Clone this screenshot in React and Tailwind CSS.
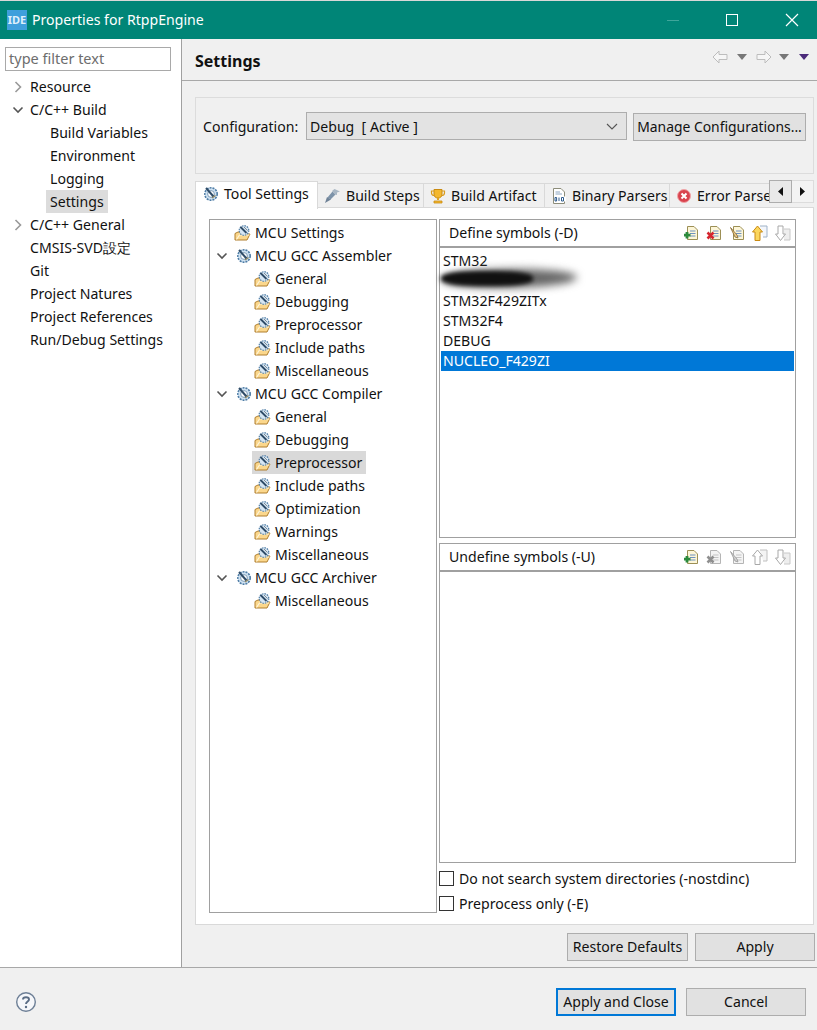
import React from "react";

const uiFont = "font-['Noto_Sans',sans-serif]";

function Chevron({ open, faded }) {
  return (
    <svg width="12" height="12" viewBox="0 0 12 12" fill="none" className="shrink-0">
      {open ? (
        <path d="M1.5 3.5 L6 8 L10.5 3.5" stroke="#555" strokeWidth="1.6" />
      ) : (
        <path d="M3.5 1 L8.5 6 L3.5 11" stroke={faded ? "#b0b0b0" : "#999"} strokeWidth="1.6" />
      )}
    </svg>
  );
}

function ToolIcon() {
  return (
    <svg width="16" height="16" viewBox="0 0 16 16" fill="none" className="shrink-0">
      <circle cx="8" cy="8" r="6.2" fill="#cfe2f2" stroke="#4f7da6" strokeWidth="1.6" strokeDasharray="2 1" />
      <circle cx="8" cy="8" r="3.4" fill="#fff" stroke="#7d9cb8" />
      <path d="M3 2 L10.5 10.5" stroke="#2f4c68" strokeWidth="2" />
      <path d="M9 12 L12.5 9.5" stroke="#8f8560" strokeWidth="1.3" />
    </svg>
  );
}

function FolderToolIcon() {
  return (
    <svg width="17" height="16" viewBox="0 0 17 16" fill="none" className="shrink-0">
      <path d="M1 15 L1 8.5 L4 7 L10 7 L10 9 L16 9 L13 15 Z" fill="#fbd78c" stroke="#b07f2e" />
      <path d="M2.5 14.5 L5.5 10 L15.5 10" stroke="#fff4d6" strokeWidth="1.2" />
      <circle cx="10" cy="5.5" r="4.8" fill="#d6e6f3" stroke="#4f7da6" strokeWidth="1.2" strokeDasharray="1.5 1" />
      <path d="M6.5 2 L12.5 8" stroke="#2f4c68" strokeWidth="1.8" />
      <path d="M10 2 L13.5 5.5" stroke="#7d8a96" strokeWidth="1" />
    </svg>
  );
}

function BuildStepsIcon() {
  return (
    <svg width="17" height="17" viewBox="0 0 17 17" fill="none">
      <path d="M1 16 L3 10 L7 12.5 Z" fill="#6f8297" />
      <path d="M3.5 10.5 L8.5 4.5 L11.5 7.5 L6.5 12.5 Z" fill="#7d93a9" />
      <path d="M8 4 L10.5 2 L16 4.5 L13 5.5 L13 8 L11 7.5 Z" fill="#a8b6c3" />
    </svg>
  );
}

function TrophyIcon() {
  return (
    <svg width="16" height="16" viewBox="0 0 16 16" fill="none">
      <path d="M4 1.5 H12 V6 C12 9 10 10 8 10 C6 10 4 9 4 6 Z" fill="#f4b82e" stroke="#c98b12" />
      <path d="M4 3 H1.5 V5 C1.5 7 3 7.5 4.5 7.5 M12 3 H14.5 V5 C14.5 7 13 7.5 11.5 7.5" stroke="#d99b1c" strokeWidth="1.2" />
      <path d="M7 10 H9 V12 H7 Z" fill="#e0a520" />
      <path d="M4 13 H12 V15 H4 Z" fill="#f4b82e" stroke="#c98b12" strokeWidth="0.8" />
    </svg>
  );
}

function BinaryIcon() {
  return (
    <svg width="16" height="16" viewBox="0 0 16 16" fill="none">
      <path d="M2.5 0.5 H10 L13.5 4 V15.5 H2.5 Z" fill="#fff" stroke="#8d8d7a" />
      <path d="M4.5 4 H9 M4.5 6 H11" stroke="#8aa4c0" />
      <path d="M3 8.5 H15 V13.5 H3 Z" fill="#fff" />
      <path d="M4 9.5 H5.6 V13 H4 Z M8 9.5 V13 M10.5 9.5 H12.5 V13 H10.5 Z" stroke="#2f5c8f" strokeWidth="1" />
    </svg>
  );
}

function ErrorIcon() {
  return (
    <svg width="16" height="16" viewBox="0 0 16 16" fill="none">
      <circle cx="8" cy="8" r="6.5" fill="#d9434e" stroke="#f0a5a8" />
      <path d="M5.5 5.5 L10.5 10.5 M10.5 5.5 L5.5 10.5" stroke="#fff" strokeWidth="2" />
    </svg>
  );
}

function SheetIcon({ disabled, children }) {
  return (
    <svg width="16" height="16" viewBox="0 0 16 16" fill="none">
      <path
        d="M4.5 1.5 H11 L14.5 5 V14.5 H4.5 Z"
        fill={disabled ? "#f4f4f4" : "#fdf6d8"}
        stroke={disabled ? "#b5b5b5" : "#9c8f55"}
      />
      <path d="M7 6 H12.5 M7 8.5 H12.5 M7 11 H12.5" stroke={disabled ? "#c4c4c4" : "#6f92c0"} />
      {children}
    </svg>
  );
}

function AddIcon() {
  return (
    <SheetIcon>
      <path d="M4 7 V13.5 M1 10.2 H7.5" stroke="#2c8a3c" strokeWidth="2.8" />
    </SheetIcon>
  );
}

function DeleteIcon({ disabled }) {
  return (
    <SheetIcon disabled={disabled}>
      <path
        d="M1.5 7.5 L7.5 13.5 M7.5 7.5 L1.5 13.5"
        stroke={disabled ? "#8f8f8f" : "#d5252f"}
        strokeWidth="2.6"
      />
    </SheetIcon>
  );
}

function EditIcon({ disabled }) {
  return (
    <SheetIcon disabled={disabled}>
      <path
        d="M1.5 2.5 L8 10 L9 13 L6 12 Z"
        fill={disabled ? "#d0d0d0" : "#e8c98a"}
        stroke={disabled ? "#999" : "#85672f"}
        strokeWidth="0.8"
      />
    </SheetIcon>
  );
}

function UpIcon({ disabled }) {
  return (
    <svg width="16" height="17" viewBox="0 0 16 17" fill="none">
      <path d="M8 1 H15 V12 H11" fill={disabled ? "#f4f4f4" : "#f3f6fb"} stroke={disabled ? "#c0c0c0" : "#9fb2c8"} />
      <path
        d="M5.5 1 L10.5 7 H8 V15.5 H3 V7 H0.5 Z"
        fill={disabled ? "#fff" : "#fbd65c"}
        stroke={disabled ? "#a8a8a8" : "#c98a12"}
      />
    </svg>
  );
}

function DownIcon() {
  return (
    <svg width="16" height="17" viewBox="0 0 16 17" fill="none">
      <path d="M9 4 H15 V15 H9" fill="#eeeeee" stroke="#c8c8c8" />
      <path d="M3 1 H8 V9 H10.5 L5.5 15.5 L0.5 9 H3 Z" fill="#fff" stroke="#a8a8a8" />
    </svg>
  );
}

function MenuArrow({ color }) {
  return (
    <svg width="10" height="6" viewBox="0 0 10 6">
      <path d="M0 0 H10 L5 6 Z" fill={color} />
    </svg>
  );
}

function NavArrow({ flip }) {
  return (
    <svg width="16" height="14" viewBox="0 0 16 14" fill="none" className={flip ? "-scale-x-100" : ""}>
      <path d="M1 7 L7 1 V4.5 H15 V9.5 H7 V13 Z" fill="#f6f6f6" stroke="#bdbdbd" />
    </svg>
  );
}

function Sidebar() {
  const items = [
    { label: "Resource", arrow: "closed" },
    { label: "C/C++ Build", arrow: "open" },
    { label: "Build Variables", sub: true },
    { label: "Environment", sub: true },
    { label: "Logging", sub: true },
    { label: "Settings", sub: true, selected: true },
    { label: "C/C++ General", arrow: "closed" },
    { label: "CMSIS-SVD設定" },
    { label: "Git" },
    { label: "Project Natures" },
    { label: "Project References" },
    { label: "Run/Debug Settings" },
  ];
  return (
    <div className="w-[182px] shrink-0 bg-white border-r border-[#a0a0a0] pt-[8px] pl-[5px]">
      <div className="w-[166px] h-[24px] border border-[#a9a9a9] px-[3px] text-[#6d6d6d] leading-[21px] text-[14.5px]">
        type filter text
      </div>
      <div className="mt-[4px] -ml-[5px]">
        {items.map((item) => (
          <div key={item.label} className={`h-[23px] flex items-center ${item.sub ? "pl-[46px]" : "pl-[12px]"}`}>
            {!item.sub && (
              <div className="w-[14px] shrink-0">{item.arrow && <Chevron open={item.arrow === "open"} />}</div>
            )}
            <span className={`px-[4px] leading-[23px] ${item.selected ? "bg-[#dcdcdc]" : ""}`}>{item.label}</span>
          </div>
        ))}
      </div>
    </div>
  );
}

function TreeRow({ label, level, arrow, selected }) {
  return (
    <div className={`h-[23px] flex items-center ${level === 2 ? "pl-[42px]" : level === 1 ? "pl-[6px]" : "pl-[22px]"}`}>
      {arrow && (
        <div className="w-[18px] shrink-0">
          <Chevron open />
        </div>
      )}
      <div className={`h-[23px] flex items-center pl-[2px] pr-[4px] ${selected ? "bg-[#d9d9d9]" : ""}`}>
        {arrow ? <ToolIcon /> : <FolderToolIcon />}
        <span className={`leading-[23px] ${arrow ? "ml-[3px]" : "ml-[4px]"}`}>{label}</span>
      </div>
    </div>
  );
}

function SymbolPanel({ title, icons, rows, height, children }) {
  return (
    <div className="flex flex-col">
      <div className="h-[29px] border border-[#a0a0a0] border-b-2 flex items-center justify-between pl-[9px] pr-[4px]">
        <span>{title}</span>
        <div className="flex items-center gap-[7px]">{icons}</div>
      </div>
      <div
        className={`relative border border-t-0 border-[#a0a0a0] pt-[3px] pl-[1px] pr-[1px] ${height}`}
      >
        {rows}
        {children}
      </div>
    </div>
  );
}

function Checkbox({ label }) {
  return (
    <div className="h-[25px] flex items-center gap-[5px]">
      <div className="w-[15px] h-[15px] border border-[#333] bg-white" />
      <span>{label}</span>
    </div>
  );
}

function Tab({ icon, label, active, width }) {
  return (
    <div
      className={`flex items-center gap-[5px] shrink-0 border-[#d9d9d9] ${width} ${
        active
          ? "h-[28px] bg-white border border-b-0 pl-[7px] pb-[3px] relative z-10 -mb-px"
          : "h-[25px] border-t border-r border-b pl-[6px]"
      }`}
    >
      {icon}
      <span className="whitespace-nowrap">{label}</span>
    </div>
  );
}

function Btn({ label, className }) {
  return (
    <button className={`h-[28px] bg-[#e1e1e1] border border-[#adadad] text-center leading-none ${className}`}>
      {label}
    </button>
  );
}

export default function App() {
  const defineRows = ["STM32", "", "STM32F429ZITx", "STM32F4", "DEBUG", "NUCLEO_F429ZI"];
  const tree = [
    { label: "MCU Settings", level: 0 },
    { label: "MCU GCC Assembler", level: 1, arrow: true },
    { label: "General", level: 2 },
    { label: "Debugging", level: 2 },
    { label: "Preprocessor", level: 2 },
    { label: "Include paths", level: 2 },
    { label: "Miscellaneous", level: 2 },
    { label: "MCU GCC Compiler", level: 1, arrow: true },
    { label: "General", level: 2 },
    { label: "Debugging", level: 2 },
    { label: "Preprocessor", level: 2, selected: true },
    { label: "Include paths", level: 2 },
    { label: "Optimization", level: 2 },
    { label: "Warnings", level: 2 },
    { label: "Miscellaneous", level: 2 },
    { label: "MCU GCC Archiver", level: 1, arrow: true },
    { label: "Miscellaneous", level: 2 },
  ];

  return (
    <div className={`w-[817px] h-[1030px] flex flex-col bg-[#f0f0f0] text-[14.1px] text-[#111] overflow-hidden ${uiFont}`}>
      {/* title bar */}
      <div className="h-[39px] shrink-0 border-t border-[#d8d8d8] bg-[#008577] flex items-center text-white pl-[7px]">
        <div className="w-[20px] h-[20px] bg-[#3f9fdc] text-[11px] font-bold leading-[20px] text-center text-[#dff0fb]">
          IDE
        </div>
        <span className="ml-[5px]">Properties for RtppEngine</span>
        <div className="ml-auto flex items-center">
          <div className="w-[12px] h-px bg-[#3fa69b]" />
          <div className="ml-[47px] w-[12px] h-[12px] border border-white" />
          <svg width="14" height="14" viewBox="0 0 14 14" className="ml-[47px] mr-[18px]">
            <path d="M1 1 L13 13 M13 1 L1 13" stroke="#fff" strokeWidth="1.2" />
          </svg>
        </div>
      </div>

      <div className="flex-1 flex min-h-0">
        <Sidebar />

        <div className="flex-1 min-w-0 flex flex-col">
          {/* page header */}
          <div className="h-[42px] shrink-0 border-b border-[#a8a8a8] flex items-center pl-[13px] pr-[8px]">
            <span className="font-bold text-[16px] pt-[2px]">Settings</span>
            <div className="ml-auto flex items-center -mt-[6px]">
              <NavArrow />
              <div className="ml-[9px]"><MenuArrow color="#777" /></div>
              <div className="ml-[9px]"><NavArrow flip /></div>
              <div className="ml-[7px]"><MenuArrow color="#777" /></div>
              <div className="ml-[10px]"><MenuArrow color="#4b2a7a" /></div>
            </div>
          </div>

          {/* configuration */}
          <div className="mt-[16px] ml-[13px] mr-[3px] h-[77px] shrink-0 border border-[#dcdcdc] flex items-start pt-[14px] pl-[7px]">
            <span className="mt-[4px] w-[103px] shrink-0">Configuration:</span>
            <div className="w-[321px] h-[28px] bg-[#e3e3e3] border border-[#adadad] flex items-center justify-between pl-[3px] pr-[8px]">
              <span className="whitespace-pre pt-px">Debug  [ Active ]</span>
              <svg width="12" height="7" viewBox="0 0 12 7" fill="none">
                <path d="M1 1 L6 6 L11 1" stroke="#555" strokeWidth="1.1" />
              </svg>
            </div>
            <Btn label="Manage Configurations..." className="ml-[6px] mt-[1px] w-[173px] text-[13.9px]" />
          </div>

          {/* tabs */}
          <div className="mt-[6px] ml-[13px] mr-[3px] h-[28px] shrink-0 flex items-end relative">
            <Tab active width="w-[123px]" icon={<ToolIcon />} label="Tool Settings" />
            <Tab width="w-[106px]" icon={<BuildStepsIcon />} label="Build Steps" />
            <Tab width="w-[121px]" icon={<TrophyIcon />} label="Build Artifact" />
            <Tab width="w-[125px]" icon={<BinaryIcon />} label="Binary Parsers" />
            <div className="flex-1 min-w-0 overflow-hidden h-[25px] border-t border-b border-[#d9d9d9] flex items-center gap-[5px] pl-[6px]">
              <ErrorIcon />
              <span className="whitespace-nowrap">Error Parsers</span>
            </div>
            {/* tab scroll buttons lie over the tab strip */}
            <div className="absolute right-0 top-0 flex h-[23px]">
              <div className="w-[23px] bg-[#e9e9e9] border border-[#adadad] flex items-center justify-center">
                <svg width="5" height="9" viewBox="0 0 5 9"><path d="M5 0 V9 L0 4.5 Z" fill="#111" /></svg>
              </div>
              <div className="w-[22px] bg-[#f3f3f3] border-y border-r border-[#dcdcdc] flex items-center justify-center">
                <svg width="5" height="9" viewBox="0 0 5 9"><path d="M0 0 V9 L5 4.5 Z" fill="#111" /></svg>
              </div>
            </div>
          </div>

          {/* tab body */}
          <div className="ml-[13px] mr-[3px] h-[717px] shrink-0 bg-white border border-t-0 border-[#d9d9d9] flex pt-[11px] pl-[13px] pr-[17px]">
            <div className="w-[228px] h-[694px] shrink-0 border border-[#a0a0a0] pt-px">
              {tree.map((t, i) => (
                <TreeRow key={i} {...t} />
              ))}
            </div>
            <div className="ml-[2px] flex-1 min-w-0 flex flex-col">
              <SymbolPanel
                title="Define symbols (-D)"
                height="h-[290px]"
                icons={
                  <>
                    <AddIcon />
                    <DeleteIcon />
                    <EditIcon />
                    <UpIcon />
                    <DownIcon />
                  </>
                }
                rows={defineRows.map((row, i) => (
                  <div
                    key={i}
                    className={`h-[20px] leading-[20px] pl-[2px] ${i === 5 ? "bg-[#0078d7] text-white" : ""}`}
                  >
                    {row}
                  </div>
                ))}
              >
                {/* hand-drawn smudge over the hidden symbol */}
                <div className="absolute left-[2px] top-[21px] w-[135px] h-[19px] rounded-[50%] bg-[#666] blur-[4px] -rotate-1" />
                <div className="absolute left-[1px] top-[23px] w-[92px] h-[15px] rounded-[40%] bg-[#111] blur-[2px]" />
              </SymbolPanel>
              <div className="mt-[5px]">
                <SymbolPanel
                  title="Undefine symbols (-U)"
                  height="h-[291px]"
                  icons={
                    <>
                      <AddIcon />
                      <DeleteIcon disabled />
                      <EditIcon disabled />
                      <UpIcon disabled />
                      <DownIcon />
                    </>
                  }
                />
              </div>
              <div className="mt-[3px]">
                <Checkbox label="Do not search system directories (-nostdinc)" />
                <Checkbox label="Preprocess only (-E)" />
              </div>
            </div>
          </div>

          {/* restore / apply */}
          <div className="mt-[8px] ml-[385px] flex gap-[7px]">
            <Btn label="Restore Defaults" className="w-[121px]" />
            <Btn label="Apply" className="w-[120px]" />
          </div>
        </div>
      </div>

      {/* footer */}
      <div className="h-[63px] shrink-0 border-t border-[#a8a8a8] flex items-start pt-[20px] pl-[16px] pr-[11px]">
        <svg width="20" height="22" viewBox="0 0 20 22" fill="none" className="mt-[3px]">
          <circle cx="10" cy="11" r="9.3" fill="#f6f7fa" stroke="#6d7f96" strokeWidth="1.4" />
          <path d="M7 8.5 C7 5.5 13 5.5 13 8.5 C13 10.5 10 10.5 10 13" stroke="#5b6d85" strokeWidth="1.9" />
          <circle cx="10" cy="16" r="1.2" fill="#5b6d85" />
        </svg>
        <button className="ml-auto w-[120px] h-[28px] pt-px bg-[#e1e1e1] border-2 border-[#0078d7] leading-none">
          Apply and Close
        </button>
        <Btn label="Cancel" className="ml-[10px] w-[120px] pt-px" />
      </div>
    </div>
  );
}
